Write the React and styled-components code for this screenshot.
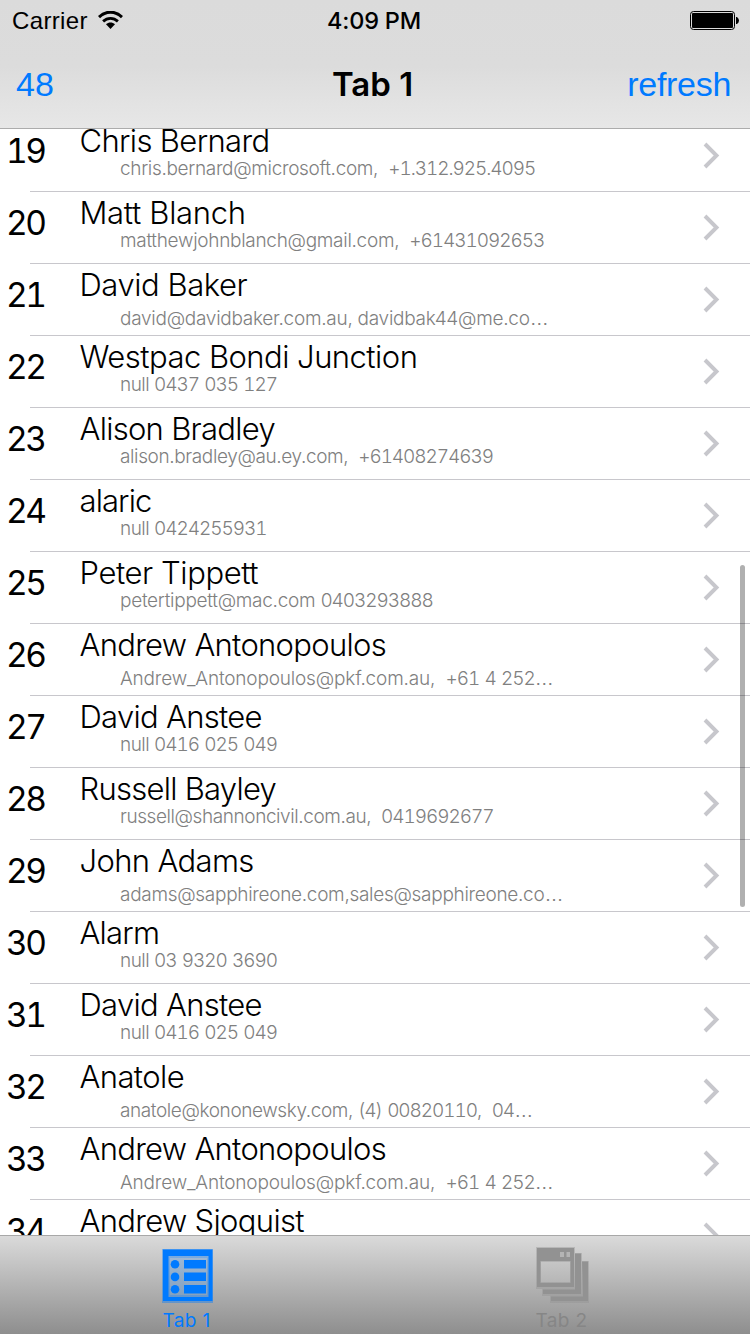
import React from "react";
import styled, { createGlobalStyle } from "styled-components";

const Global = createGlobalStyle`
  * { box-sizing: border-box; }
  body { margin: 0; background: #fff; overflow: hidden; }
`;

const Screen = styled.div`
  width: 750px;
  height: 1334px;
  display: flex;
  flex-direction: column;
  overflow: hidden;
  background: #fff;
  color: #000;
  font-family: "Liberation Sans", Arial, sans-serif;
`;

const Header = styled.header`
  flex: none;
  height: 129px;
  border-bottom: 1px solid #acacac;
  background: linear-gradient(#dbdbdb 0, #dcdcdc 66px, #e7e7e7 128px);
`;

const StatusBar = styled.div`
  height: 40px;
  display: grid;
  grid-template-columns: 1fr auto 1fr;
  align-items: center;
  padding: 2px 11px 0 12px;
  font-size: 24px;
  line-height: 38px;
`;

const Carrier = styled.div`
  display: flex;
  align-items: center;
  gap: 10px;
  letter-spacing: 0.35px;
  svg { margin-top: -2px; }
`;

const Time = styled.div`
  margin-left: -3px;
  font-family: Inter, sans-serif;
  font-weight: 500;
  font-size: 23.5px;
  letter-spacing: -0.2px;
`;

const Battery = styled.svg`
  justify-self: end;
  margin-top: -2px;
`;

const NavBar = styled.div`
  height: 88px;
  display: grid;
  grid-template-columns: 1fr auto 1fr;
  align-items: center;
  padding: 1px 19px 0 16px;
`;

const NavAction = styled.span`
  color: #007aff;
  font-size: 34px;
  justify-self: ${(p) => (p.$end ? "end" : "start")};
  letter-spacing: ${(p) => (p.$end ? "-0.3px" : "0")};
`;

const Title = styled.h1`
  margin: -1px 0 0 -2px;
  font-family: Inter, sans-serif;
  font-size: 33px;
  font-weight: 600;
`;

const Viewport = styled.main`
  flex: 1;
  min-height: 0;
  overflow: hidden;
  position: relative;
`;

const List = styled.ul`
  list-style: none;
  margin: -9px 0 0;
  padding: 0;
`;

const Row = styled.li`
  height: 72px;
  display: grid;
  grid-template-columns: 79.5px 1fr 49px;
  background: linear-gradient(#c8c7cc, #c8c7cc) 30px 71px / 720px 1px no-repeat;
`;

const Index = styled.span`
  padding-left: 6px;
  font-family: Inter, sans-serif;
  font-variant-numeric: tabular-nums;
  font-size: 33.5px;
  line-height: 63px;
  letter-spacing: -2.5px;
`;

const Person = styled.div`
  min-width: 0;
  white-space: pre;
  font-family: Inter, "Liberation Sans", sans-serif;
  font-weight: 300;
`;

const Name = styled.div`
  height: 36px;
  font-size: 31px;
  line-height: 41px;
  letter-spacing: ${(p) => p.$track}px;
`;

const Detail = styled.div`
  margin-left: 40.5px;
  margin-top: ${(p) => (p.$low ? 6 : 0)}px;
  font-size: 19px;
  line-height: 25px;
  color: #808080;
  letter-spacing: ${(p) => p.$track}px;
`;

const Phone = styled.span`
  font-variant-numeric: tabular-nums;
  letter-spacing: -1.05px;
  word-spacing: 1.2px;
`;

const Ellipsis = styled.span`
  letter-spacing: 0;
  font-family: "Liberation Sans", sans-serif;
`;

const Chevron = styled.svg`
  align-self: center;
  margin-top: -3px;
`;

const ScrollThumb = styled.div`
  position: absolute;
  right: 5px;
  top: 436px;
  width: 5px;
  height: 342px;
  border-radius: 3px;
  background: rgba(0, 0, 0, 0.31);
`;

const TabBar = styled.nav`
  flex: none;
  height: 99px;
  display: flex;
  border-top: 1px solid #a8a8a8;
  background: linear-gradient(#dadada, #8e8e8e);
`;

const Tab = styled.div`
  width: 375px;
  display: flex;
  flex-direction: column;
  align-items: center;
  color: ${(p) => (p.$active ? "#007aff" : "#868686")};
  font-family: Inter, sans-serif;
  font-size: 19px;
  line-height: 24px;
  letter-spacing: 0.4px;
  svg { flex: none; margin-top: 11px; margin-bottom: 4px; }
  span { margin-left: -2px; }
`;

const people = [
  { name: "Chris Bernard", track: -0.65, mail: "chris.bernard@microsoft.com,  ", mailTrack: -0.33, phone: "+1.312.925.4095", phoneTrack: -0.8 },
  { name: "Matt Blanch", track: -0.32, mail: "matthewjohnblanch@gmail.com,  ", mailTrack: -0.3, phone: "+61431092653" },
  { name: "David Baker", track: -0.45, mail: "david@davidbaker.com.au, davidbak44@me.co", mailTrack: -0.27, cut: true },
  { name: "Westpac Bondi Junction", track: -0.53, mail: "null ", mailTrack: -0.5, phone: "0437 035 127" },
  { name: "Alison Bradley", track: -0.72, mail: "alison.bradley@au.ey.com,  ", mailTrack: -0.38, phone: "+61408274639" },
  { name: "alaric", track: -0.9, mail: "null ", mailTrack: -0.5, phone: "0424255931", phoneTrack: -1.25 },
  { name: "Peter Tippett", track: -0.42, mail: "petertippett@mac.com ", mailTrack: -0.28, phone: "0403293888" },
  { name: "Andrew Antonopoulos", track: -0.7, mail: "Andrew_Antonopoulos@pkf.com.au,  ", mailTrack: -0.18, phone: "+61 4 252", cut: true },
  { name: "David Anstee", track: -0.7, mail: "null ", mailTrack: -0.5, phone: "0416 025 049" },
  { name: "Russell Bayley", track: -0.74, mail: "russell@shannoncivil.com.au,  ", mailTrack: -0.42, phone: "0419692677" },
  { name: "John Adams", track: -0.65, mail: "adams@sapphireone.com,sales@sapphireone.co", mailTrack: -0.3, cut: true },
  { name: "Alarm", track: -0.8, mail: "null ", mailTrack: -0.5, phone: "03 9320 3690" },
  { name: "David Anstee", track: -0.7, mail: "null ", mailTrack: -0.5, phone: "0416 025 049" },
  { name: "Anatole", track: -0.6, mail: "anatole@kononewsky.com, ", mailTrack: -0.4, phone: "(4) 00820110,  04", cut: true },
  { name: "Andrew Antonopoulos", track: -0.7, mail: "Andrew_Antonopoulos@pkf.com.au,  ", mailTrack: -0.18, phone: "+61 4 252", cut: true },
  { name: "Andrew Sjoquist", track: -0.67 },
];

const WifiIcon = () => (
  <svg width="25" height="18" viewBox="0 0 25 18" fill="none" stroke="#000">
    <path d="M1 6.1C7.6-.5 17.4-.5 24 6.1" strokeWidth="3" />
    <path d="M5.1 10.4c4.3-4 10.5-4 14.8 0" strokeWidth="2.8" />
    <path d="M8 13.3c2.7-2.3 6.3-2.3 9 0L12.5 18z" fill="#000" stroke="none" />
  </svg>
);

const ListIcon = () => (
  <svg width="53" height="58" viewBox="0 0 53 58" fill="#007aff">
    <path opacity="0.4" fillRule="evenodd" d="M1 2h51v54H1zM9 11v37h37V11z" />
    <path fillRule="evenodd" d="M2 2.500h49.500V54H2zM7.500 9v41h40V9z" />
    <path opacity="0.22" d="M9 11h37v37H9z" />
    <path d="M23 13h22v8.500H23zM23 25.500h22v8.500H23zM23 38h22v8.500H23z" />
    <circle cx="14" cy="17.300" r="4.300" />
    <circle cx="14" cy="29.900" r="4.300" />
    <circle cx="14" cy="42.300" r="4.300" />
  </svg>
);

const WindowsIcon = () => (
  <svg width="53" height="58" viewBox="0 0 53 58" fill="#929292">
    <path opacity="0.4" fillRule="evenodd" d="M0 0h39v6h7v8h7v42H14v-7H6v-7H0zM5 15v20h29V15z" />
    <path fillRule="evenodd" d="M1 1h37v39H1zM4.500 14v22h30V14z" />
    <path d="M39 6.500h6V47H7v-4.500h32zM46 14.500h6V54H15v-4.500h32z" />
    <path fill="#b4b4b4" d="M24 5h4v5h-4zM30.500 5h3.500v5h-3.500z" />
  </svg>
);

export default function App() {
  return (
    <Screen>
      <Global />
      <Header>
        <StatusBar>
          <Carrier>Carrier <WifiIcon /></Carrier>
          <Time>4:09 PM</Time>
          <Battery width="50" height="20" viewBox="0 0 50 20">
            <rect x="1.500" y="1.500" width="44" height="18" rx="3" fill="none" stroke="#000" />
            <rect x="3" y="3" width="41" height="15" rx="1" />
            <path d="M47 7h1q2 1.500 2 3.500t-2 3.500h-1z" />
          </Battery>
        </StatusBar>
        <NavBar>
          <NavAction>48</NavAction>
          <Title>Tab 1</Title>
          <NavAction $end>refresh</NavAction>
        </NavBar>
      </Header>
      <Viewport>
        <List>
          {people.map((p, i) => (
            <Row key={i}>
              <Index>{19 + i}</Index>
              <Person>
                <Name $track={p.track}>{p.name}</Name>
                {p.mail && (
                  <Detail $low={p.cut} $track={p.mailTrack}>
                    {p.mail}
                    {p.phone && <Phone>{p.phone}</Phone>}
                    {p.cut && <Ellipsis>…</Ellipsis>}
                  </Detail>
                )}
              </Person>
              <Chevron width="20" height="28" viewBox="0 0 20 28" fill="none" stroke="#c7c7cc" strokeWidth="3.900">
                <path d="M4 3L15.500 14.500L4 26" />
              </Chevron>
            </Row>
          ))}
        </List>
        <ScrollThumb />
      </Viewport>
      <TabBar>
        <Tab $active><ListIcon /><span>Tab 1</span></Tab>
        <Tab><WindowsIcon /><span>Tab 2</span></Tab>
      </TabBar>
    </Screen>
  );
}
